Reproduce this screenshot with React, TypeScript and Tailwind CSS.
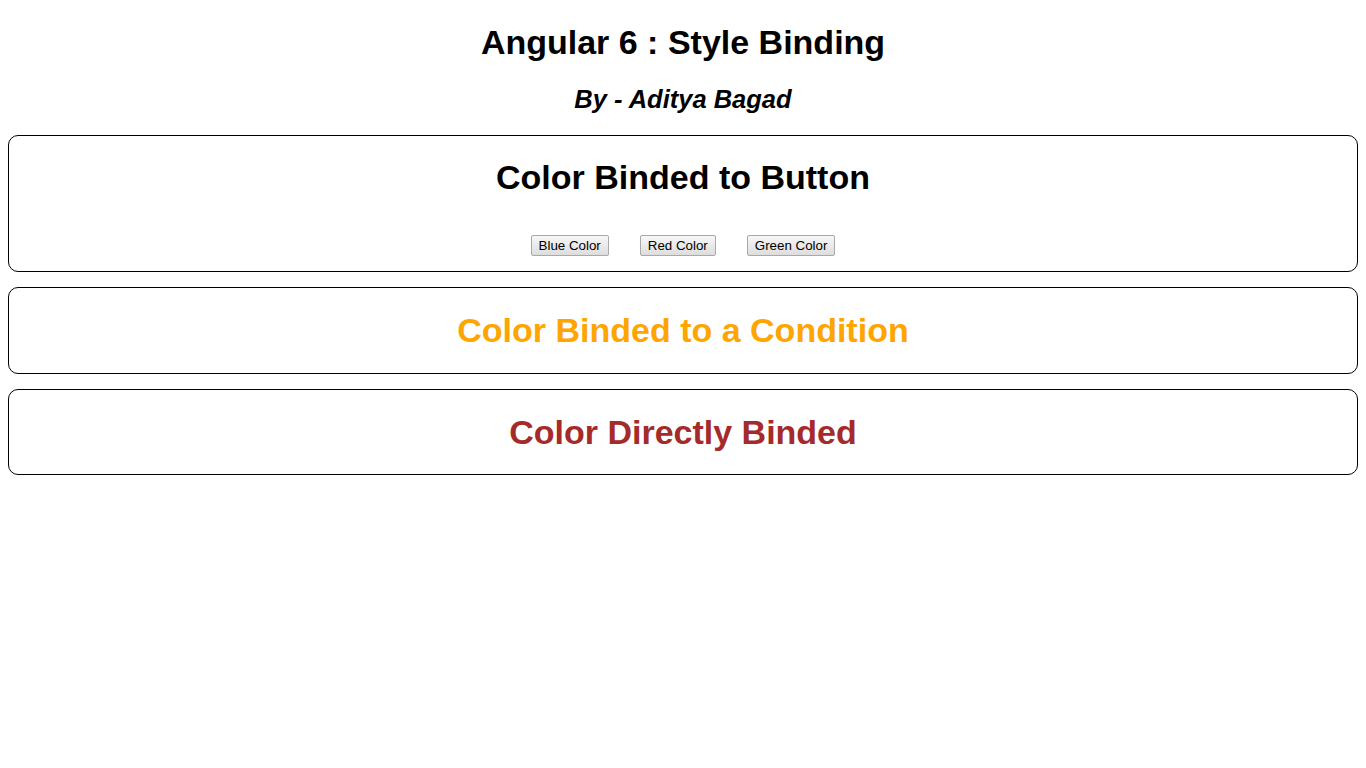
import React from "react";

const font = { fontFamily: '"Liberation Sans", Arial, sans-serif' };

function ColorButton({ label }: { label: string }) {
  return (
    <button
      type="button"
      className="h-[21px] rounded-[2px] border border-[#a9a9a9] bg-gradient-to-b from-[#f7f7f7] to-[#dddddd] px-[7px] text-[13.33px] leading-[19px] text-black"
    >
      {label}
    </button>
  );
}

export default function App() {
  return (
    <div className="min-h-[768px] bg-white px-2 pt-[24px] text-black" style={font}>
      <h1 className="text-center text-[34px] font-bold leading-[37px]">Angular 6 : Style Binding</h1>
      <h2 className="mt-[24px] text-center text-[25.5px] font-bold italic leading-[28px]">By - Aditya Bagad</h2>

      <div className="mt-[22px] flex flex-col">
        <div className="rounded-[10px] border border-black pt-[23px] pb-[15px]">
          <h1 className="text-center text-[34px] font-bold leading-[37px]">Color Binded to Button</h1>
          <div className="mt-[39px] flex justify-center gap-[31px]">
            <ColorButton label="Blue Color" />
            <ColorButton label="Red Color" />
            <ColorButton label="Green Color" />
          </div>
        </div>

        <div className="mt-[15px] rounded-[10px] border border-black py-6">
          <h1 className="text-center text-[34px] font-bold leading-[37px] text-[#ffa500]">
            Color Binded to a Condition
          </h1>
        </div>

        <div className="mt-[15px] rounded-[10px] border border-black pt-6 pb-[23px]">
          <h1 className="text-center text-[34px] font-bold leading-[37px] text-[#a52a2a]">Color Directly Binded</h1>
        </div>
      </div>
    </div>
  );
}
